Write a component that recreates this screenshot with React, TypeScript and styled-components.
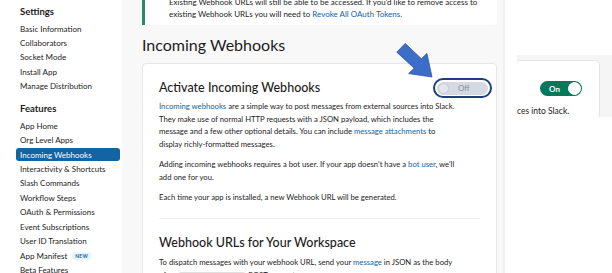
import React from 'react';
import styled, { createGlobalStyle } from 'styled-components';

const GlobalStyle = createGlobalStyle`
  html, body {
    margin: 0;
    padding: 0;
  }
  body {
    font-family: Lato, 'Noto Sans', sans-serif;
    color: #1d1c1d;
    background: #fff;
  }
`;

interface NavGroup {
  title: string;
  items: { label: string; badge?: string }[];
}

const NAV: NavGroup[] = [
  {
    title: 'Settings',
    items: [
      { label: 'Basic Information' },
      { label: 'Collaborators' },
      { label: 'Socket Mode' },
      { label: 'Install App' },
      { label: 'Manage Distribution' },
    ],
  },
  {
    title: 'Features',
    items: [
      { label: 'App Home' },
      { label: 'Org Level Apps' },
      { label: 'Incoming Webhooks' },
      { label: 'Interactivity & Shortcuts' },
      { label: 'Slash Commands' },
      { label: 'Workflow Steps' },
      { label: 'OAuth & Permissions' },
      { label: 'Event Subscriptions' },
      { label: 'User ID Translation' },
      { label: 'App Manifest', badge: 'NEW' },
      { label: 'Beta Features' },
    ],
  },
];

const ACTIVE = 'Incoming Webhooks';

const Arrow = () => (
  <ArrowSvg viewBox="0 0 40 40" width={40} height={40}>
    <polygon
      points="9.2,4.4 25.4,19.8 30.9,14.4 36,38 12.6,34.6 18.2,29.2 0.8,13.2"
      fill="#3b6dc9"
      stroke="#2b56a6"
      strokeWidth="0.8"
      strokeLinejoin="round"
    />
  </ArrowSvg>
);

const App = () => (
  <>
    <GlobalStyle />
    <Page>
      <Sidebar>
        {NAV.map((group) => (
          <NavSection key={group.title}>
            <NavTitle>{group.title}</NavTitle>
            {group.items.map((item) => (
              <NavItem key={item.label} $active={item.label === ACTIVE}>
                {item.label}
                {item.badge && <Badge>{item.badge}</Badge>}
              </NavItem>
            ))}
          </NavSection>
        ))}
      </Sidebar>

      <Main>
        <Notice>
          Existing Webhook URLs will still be able to be accessed. If you'd like to remove access to
          <br />
          existing Webhook URLs you will need to <Link>Revoke All OAuth Tokens.</Link>
        </Notice>

        <PageTitle>Incoming Webhooks</PageTitle>

        <Card>
          <CardHeader>
            <SectionTitle>Activate Incoming Webhooks</SectionTitle>
            <ToggleWrap>
              <Arrow />
              <Ring>
                <OffSwitch>
                  <Knob $on={false} />
                  <SwitchLabel $on={false}>Off</SwitchLabel>
                </OffSwitch>
              </Ring>
            </ToggleWrap>
          </CardHeader>
          <Para>
            <Link>Incoming webhooks</Link> are a simple way to post messages from external sources into Slack.
            <br />
            They make use of normal HTTP requests with a JSON payload, which includes the
            <br />
            message and a few other optional details. You can include <Link>message attachments</Link> to
            <br />
            display richly-formatted messages.
          </Para>
          <Para>
            Adding incoming webhooks requires a bot user. If your app doesn't have a <Link>bot user</Link>, we'll
            <br />
            add one for you.
          </Para>
          <Para>Each time your app is installed, a new Webhook URL will be generated.</Para>
          <Divider />
          <SectionTitle>Webhook URLs for Your Workspace</SectionTitle>
          <Para $tight>
            To dispatch messages with your webhook URL, send your <Link>message</Link> in JSON as the body
            <br />
            of an <Code>application/json</Code> POST request.
          </Para>
        </Card>
      </Main>

      <Aside>
        <Snippet>
          <SnippetCard>
            <SwitchRow>
              <OnSwitch>
                <SwitchLabel $on>On</SwitchLabel>
                <Knob $on />
              </OnSwitch>
            </SwitchRow>
            <SnippetText>ces into Slack.</SnippetText>
          </SnippetCard>
        </Snippet>
      </Aside>
    </Page>
  </>
);

const Page = styled.div`
  display: flex;
  width: 612px;
  height: 273px;
  overflow: hidden;
`;

const Sidebar = styled.nav`
  width: 122px;
  flex-shrink: 0;
  padding-top: 5px;
  background: #fff;
`;

const NavSection = styled.div`
  display: flex;
  flex-direction: column;
  margin-bottom: 8px;
`;

const NavTitle = styled.div`
  padding-left: 20px;
  font-size: 9.5px;
  font-weight: 700;
  line-height: 14px;
  margin-bottom: 3px;
`;

const NavItem = styled.div<{ $active: boolean }>`
  display: flex;
  align-items: center;
  margin: 0 2px 1.45px 16px;
  padding: 0 4px;
  height: 13px;
  border-radius: 3px;
  font-size: 8px;
  white-space: nowrap;
  color: ${({ $active }) => ($active ? '#fff' : '#1d1c1d')};
  background: ${({ $active }) => ($active ? '#1264a3' : 'transparent')};
`;

const Badge = styled.span`
  margin-left: 5px;
  padding: 1px 3px;
  border-radius: 3px;
  background: #e8f5fa;
  color: #1264a3;
  font-size: 5px;
  font-weight: 700;
  letter-spacing: 0.2px;
`;

const Main = styled.main`
  flex: 1;
  display: flex;
  flex-direction: column;
  padding: 0 6px 0 20px;
  background: #f8f8f8;
`;

const Notice = styled.div`
  margin-top: -8px;
  padding: 4px 10px 5px 24px;
  background: #fff;
  border-left: 3px solid #2a8c67;
  border-radius: 0 4px 4px 0;
  font-size: 8px;
  line-height: 12px;
  white-space: nowrap;
`;

const Link = styled.span`
  color: #1264a3;
`;

const PageTitle = styled.h1`
  margin: 10px 0 8px;
  font-size: 16px;
  font-weight: 400;
  line-height: 20px;
`;

const Card = styled.section`
  background: #fff;
  border: 1px solid #e6e6e6;
  border-radius: 4px;
  padding: 14px 16px 0 16px;
`;

const CardHeader = styled.div`
  display: flex;
  align-items: center;
  justify-content: space-between;
  margin-right: -12px;
`;

const SectionTitle = styled.h2`
  margin: 0;
  font-size: 12.5px;
  font-weight: 500;
  line-height: 16px;
`;

const ToggleWrap = styled.div`
  position: relative;
`;

const ArrowSvg = styled.svg`
  position: absolute;
  left: -37px;
  top: -39px;
`;

const Ring = styled.div`
  display: flex;
  width: 59px;
  height: 20px;
  box-sizing: border-box;
  padding: 1.5px 2px;
  border: 2.5px solid #1e3f7d;
  border-radius: 10px;
`;

const OffSwitch = styled.div`
  flex: 1;
  display: flex;
  align-items: center;
  gap: 9px;
  padding: 0 1px;
  border-radius: 8px;
  background: #d4d9e4;
`;

const Knob = styled.span<{ $on: boolean }>`
  width: ${({ $on }) => ($on ? 13 : 11)}px;
  height: ${({ $on }) => ($on ? 13 : 11)}px;
  border-radius: 50%;
  box-sizing: border-box;
  background: ${({ $on }) => ($on ? '#fff' : '#e3e6ed')};
  border: 1px solid ${({ $on }) => ($on ? '#fff' : '#c6ccd9')};
`;

const SwitchLabel = styled.span<{ $on: boolean }>`
  font-size: 8px;
  font-weight: ${({ $on }) => ($on ? 700 : 400)};
  color: ${({ $on }) => ($on ? '#fff' : '#8a8f9a')};
`;

const Para = styled.p<{ $tight?: boolean }>`
  margin: ${({ $tight }) => ($tight ? '5px 0 0' : '2px 0 7.6px')};
  font-size: 7.7px;
  line-height: 12.6px;
  white-space: nowrap;
`;

const Divider = styled.hr`
  margin: 15px 0 16px;
  border: none;
  border-top: 1px solid #f0f0f0;
`;

const Code = styled.code`
  padding: 0 2px;
  border: 1px solid #e0e0e0;
  border-radius: 3px;
  background: #f8f8f8;
  color: #e01e5a;
  font-family: 'Liberation Mono', monospace;
  font-size: 6.5px;
`;

const Aside = styled.aside`
  width: 107px;
  flex-shrink: 0;
  border-left: 2px solid #f0f0f0;
  background: #fff;
`;

const Snippet = styled.div`
  margin: 55px 0 0 12px;
  padding: 5px 12px 0 0;
  background: #f5f5f5;
`;

const SnippetCard = styled.div`
  height: 57px;
  box-sizing: border-box;
  padding-top: 20px;
  background: #fff;
  border-top: 1px solid #e6e6e6;
  border-right: 1px solid #e6e6e6;
  border-top-right-radius: 5px;
`;

const SwitchRow = styled.div`
  display: flex;
  padding-left: 23px;
`;

const OnSwitch = styled.div`
  display: flex;
  align-items: center;
  justify-content: space-between;
  width: 42px;
  height: 15px;
  box-sizing: border-box;
  padding: 0 1px 0 9px;
  border-radius: 8px;
  background: #007a5a;
`;

const SnippetText = styled.div`
  margin-top: 9px;
  font-size: 8.5px;
  line-height: 12px;
  white-space: nowrap;
`;

export default App;
